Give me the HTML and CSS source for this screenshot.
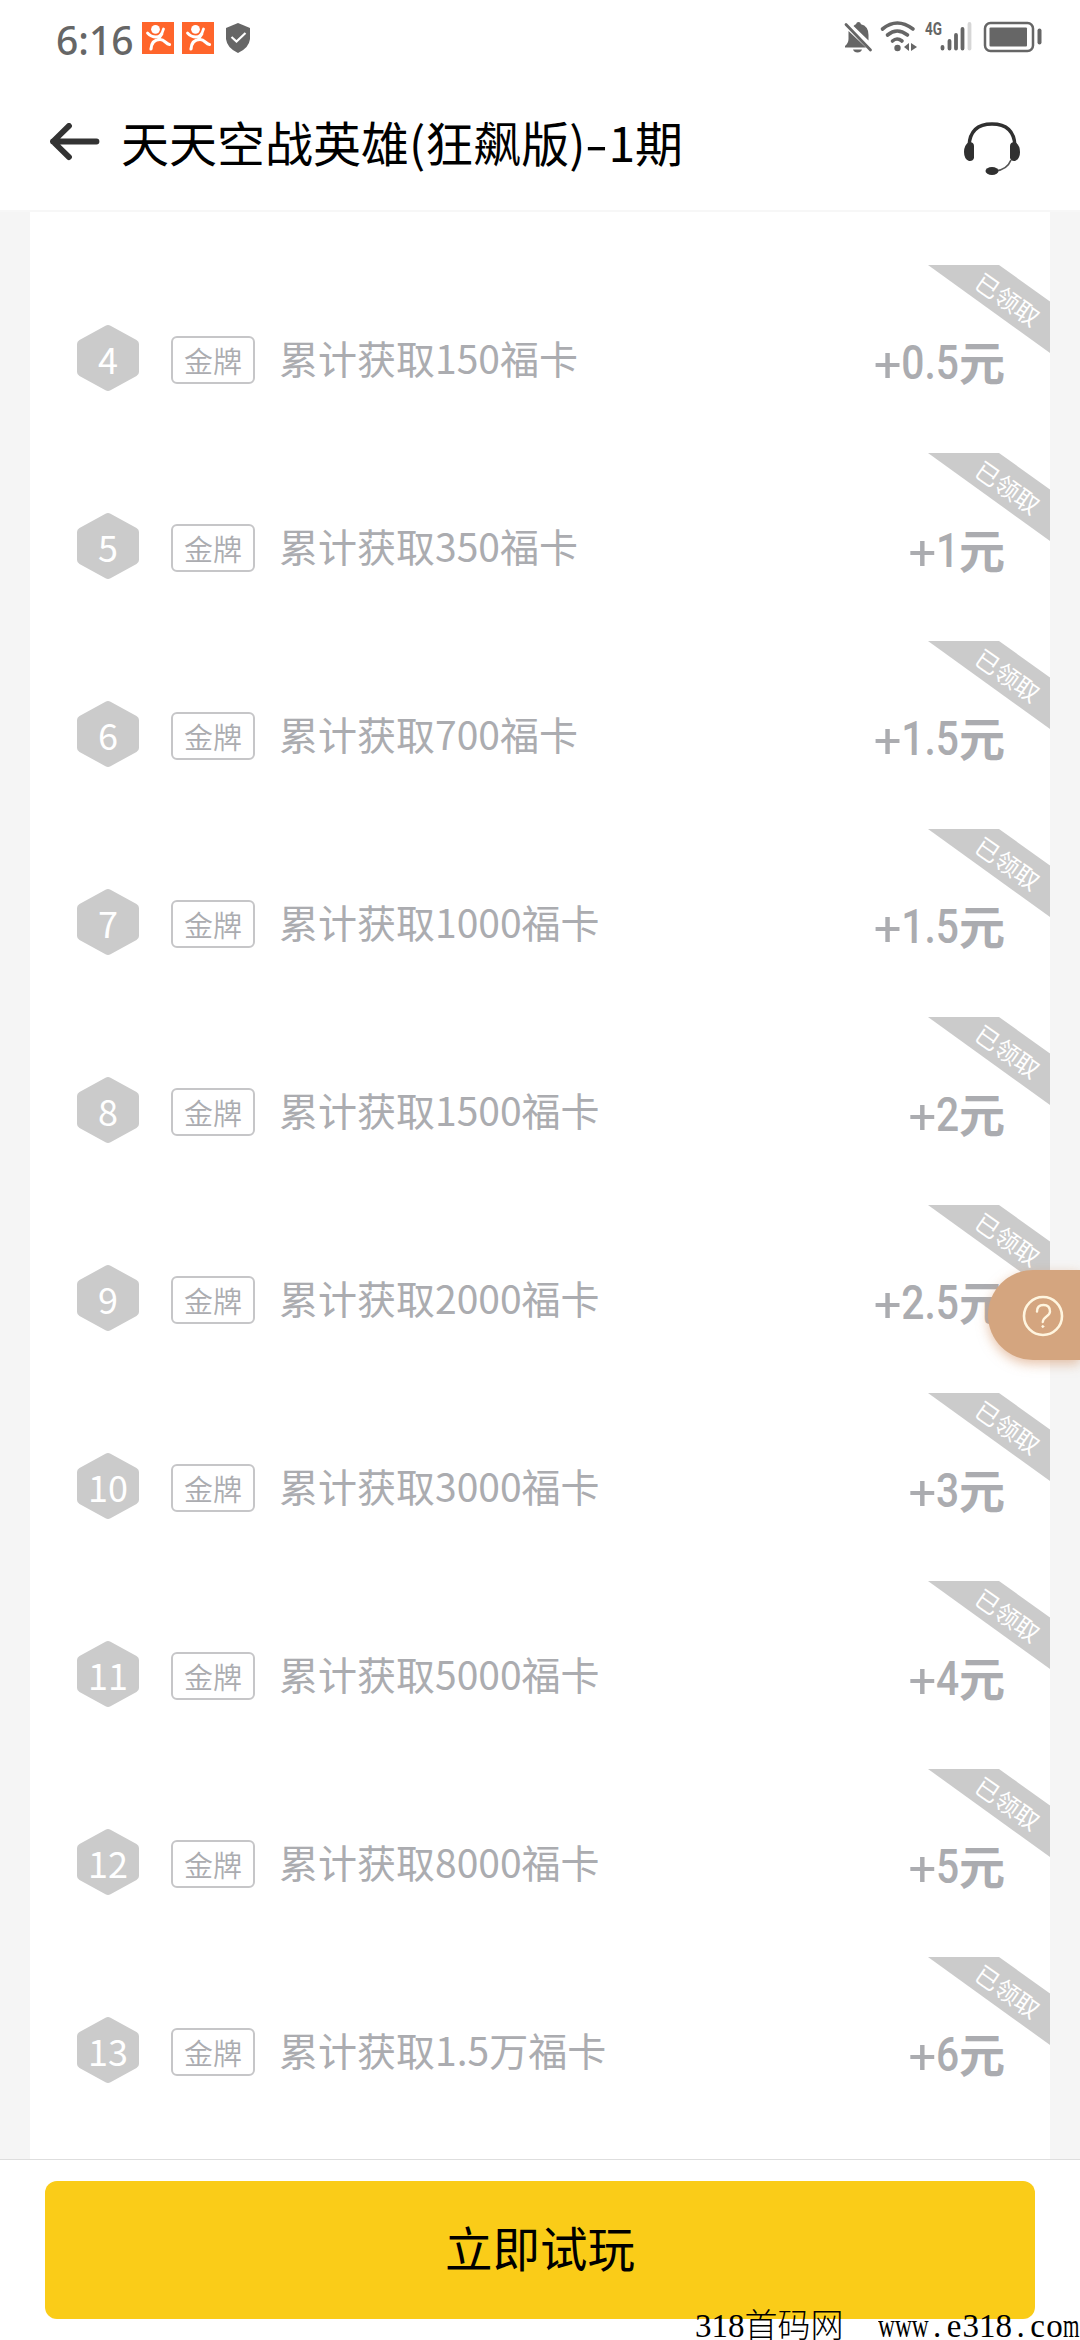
FILE: index.html
```html
<!DOCTYPE html>
<html lang="zh-CN">
<head>
<meta charset="utf-8">
<title>天天空战英雄(狂飙版)-1期</title>
<link rel="stylesheet" href="styles.css">
</head>
<body>
<svg class="defs" width="0" height="0" aria-hidden="true">
  <symbol id="hex" viewBox="0 0 62 66"><path d="M28.5 .8Q31-.6 33.5.8L59.5 15Q62 16.500 62 19V47Q62 49.500 59.500 51L33.500 65.200Q31 66.600 28.500 65.200L2.500 51Q0 49.500 0 47V19Q0 16.500 2.500 15Z" fill="#cbcbcb"/></symbol>
  <symbol id="band" viewBox="0 0 122 88"><path d="M0 0H71L122 36.500V88Z" fill="#cbcbcb"/></symbol>
  <symbol id="runner" viewBox="0 0 32 32"><rect width="32" height="32" fill="#ff652b"/><circle cx="13.500" cy="7.300" r="4.400" fill="#fff"/><g fill="none" stroke="#fff" stroke-linecap="round" stroke-width="2.800"><path d="M5.500 11Q9 15 14 15Q19.500 14.500 21.500 7"/><path d="M9 27C9.500 20.500 13 17.500 18 17.500S23.500 22 27.500 22.500" stroke-width="3.200"/><path d="M20 12L16.500 17"/></g></symbol>
</svg>
<div class="screen">
  <header class="top">
    <div class="status">
      <span class="clock">6:16</span>
      <svg class="app" width="32" height="32"><use href="#runner"/></svg>
      <svg class="app" width="32" height="32"><use href="#runner"/></svg>
      <svg class="shield" width="24" height="30" viewBox="0 0 24 30"><path d="M12 0L24 5V16Q23 25 12 30Q1 25 0 16V5Z" fill="#666"/><path d="M5.500 14L10.500 18.500L19.500 10" fill="none" stroke="#fff" stroke-width="2.200"/></svg>
      <div class="signals">
        <svg width="200" height="34" viewBox="0 0 200 34">
          <path d="M4.500 10L22 26.500H1V25Q4.500 22 4.500 18Z" fill="#666"/>
          <path d="M9.500 5Q11 3.500 12 3.200Q12.500 1 14.500 1Q16.500 1 17 3.200Q24.500 5 24.500 14V19.500Z" fill="#666"/>
          <path d="M9 28.500H18Q17 31.500 13.500 31.500T9 28.500Z" fill="#666"/>
          <path d="M2 3.500L26.500 29" stroke="#666" stroke-width="2.800" stroke-linecap="round"/>
          <g fill="none" stroke="#666" stroke-width="3.600" stroke-linecap="round"><path d="M38.500 8Q53-4 69 8"/><path d="M43.500 14Q53 6 63.500 14"/><path d="M48.500 20Q53 16 58 20"/></g>
          <circle cx="53.500" cy="27" r="3.200" fill="#666"/><path d="M60 26L65 22V30ZM73 26L67 22V30Z" fill="#666"/>
          <g stroke="#666" stroke-width="3.800" stroke-linecap="round"><path d="M98.500 26V27.500M105.500 20V27.500M112 14V27.500M118.500 8V27.500"/><path d="M125.500 3V27.500" stroke="#d6d6d6"/></g>
          <rect x="141" y="2" width="48" height="28" rx="5.500" fill="none" stroke="#666" stroke-width="2.500"/><rect x="145.500" y="6.500" width="37.500" height="19" rx="1" fill="#666"/><rect x="193.500" y="7.500" width="4" height="16" rx="2" fill="#666"/>
          <text class="net" x="81" y="14" textLength="17" lengthAdjust="spacingAndGlyphs">4G</text>
        </svg>
      </div>
    </div>
    <div class="nav">
      <svg class="back" width="50" height="38" viewBox="0 0 50 38"><path d="M19 2.900L3 18.500L19 34.100M3 18.500H46.500" fill="none" stroke="#333" stroke-width="5.800" stroke-linecap="round" stroke-linejoin="round"/></svg>
      <h1 class="title">天天空战英雄(狂飙版)<span class="dash">-</span>1期</h1>
      <svg class="headset" width="56" height="54" viewBox="0 0 56 54"><path d="M5 24Q6 2 28 2T51 24" fill="none" stroke="#303030" stroke-width="3.400"/><path d="M47 38Q43 48 31 49" fill="none" stroke="#555" stroke-width="1.700"/><path d="M5 20Q10 20 10 24V36Q9 39.500 5 39Q0 37 0 30T5 20Z" fill="#303030"/><path d="M51 20Q46 20 46 24V36Q47 39.500 51 39Q56 37 56 30T51 20Z" fill="#303030"/><ellipse cx="28" cy="49" rx="6.500" ry="4" fill="#303030"/></svg>
    </div>
  </header>
  <main class="page">
    <ul class="tasks">
      <li class="task"><div class="num"><svg><use href="#hex"/></svg><b>4</b></div><span class="tag">金牌</span><span class="desc">累计获取150福卡</span><div class="price"><span class="amount"><i>+</i>0.5</span><span class="unit">元</span></div><div class="got"><svg><use href="#band"/></svg><em>已领取</em></div></li>
      <li class="task"><div class="num"><svg><use href="#hex"/></svg><b>5</b></div><span class="tag">金牌</span><span class="desc">累计获取350福卡</span><div class="price"><span class="amount"><i>+</i>1</span><span class="unit">元</span></div><div class="got"><svg><use href="#band"/></svg><em>已领取</em></div></li>
      <li class="task"><div class="num"><svg><use href="#hex"/></svg><b>6</b></div><span class="tag">金牌</span><span class="desc">累计获取700福卡</span><div class="price"><span class="amount"><i>+</i>1.5</span><span class="unit">元</span></div><div class="got"><svg><use href="#band"/></svg><em>已领取</em></div></li>
      <li class="task"><div class="num"><svg><use href="#hex"/></svg><b>7</b></div><span class="tag">金牌</span><span class="desc">累计获取1000福卡</span><div class="price"><span class="amount"><i>+</i>1.5</span><span class="unit">元</span></div><div class="got"><svg><use href="#band"/></svg><em>已领取</em></div></li>
      <li class="task"><div class="num"><svg><use href="#hex"/></svg><b>8</b></div><span class="tag">金牌</span><span class="desc">累计获取1500福卡</span><div class="price"><span class="amount"><i>+</i>2</span><span class="unit">元</span></div><div class="got"><svg><use href="#band"/></svg><em>已领取</em></div></li>
      <li class="task"><div class="num"><svg><use href="#hex"/></svg><b>9</b></div><span class="tag">金牌</span><span class="desc">累计获取2000福卡</span><div class="price"><span class="amount"><i>+</i>2.5</span><span class="unit">元</span></div><div class="got"><svg><use href="#band"/></svg><em>已领取</em></div></li>
      <li class="task"><div class="num"><svg><use href="#hex"/></svg><b>10</b></div><span class="tag">金牌</span><span class="desc">累计获取3000福卡</span><div class="price"><span class="amount"><i>+</i>3</span><span class="unit">元</span></div><div class="got"><svg><use href="#band"/></svg><em>已领取</em></div></li>
      <li class="task"><div class="num"><svg><use href="#hex"/></svg><b>11</b></div><span class="tag">金牌</span><span class="desc">累计获取5000福卡</span><div class="price"><span class="amount"><i>+</i>4</span><span class="unit">元</span></div><div class="got"><svg><use href="#band"/></svg><em>已领取</em></div></li>
      <li class="task"><div class="num"><svg><use href="#hex"/></svg><b>12</b></div><span class="tag">金牌</span><span class="desc">累计获取8000福卡</span><div class="price"><span class="amount"><i>+</i>5</span><span class="unit">元</span></div><div class="got"><svg><use href="#band"/></svg><em>已领取</em></div></li>
      <li class="task"><div class="num"><svg><use href="#hex"/></svg><b>13</b></div><span class="tag">金牌</span><span class="desc">累计获取1.5万福卡</span><div class="price"><span class="amount"><i>+</i>6</span><span class="unit">元</span></div><div class="got"><svg><use href="#band"/></svg><em>已领取</em></div></li>
    </ul>
  </main>
  <footer class="bottom"><button class="play">立即试玩</button></footer>
  <div class="help"><svg width="42" height="42" viewBox="0 0 42 42" fill="none" stroke="#fff5df" stroke-linecap="round"><circle cx="21" cy="21" r="19" stroke-width="2.600"/><path d="M15 16.500Q15 10 21.500 10T28 16.500Q28 19 24.500 21.500T20.800 27" stroke-width="2.400"/><circle cx="20.800" cy="31.500" r="1" fill="#fff5df" stroke-width="1"/></svg></div>
  <div class="mark"><span>318首码网</span><span class="site"><span class="www">www</span><s>.</s><s>e</s>318<s>.</s><s>c</s><s>o</s><span class="m">m</span></span></div>
</div>
</body>
</html>
```
FILE: styles.css
```css
* { box-sizing: border-box; }
body { margin: 0; font-family: "Noto Sans CJK SC", "Noto Sans", sans-serif; }
.defs { position: absolute; }
.screen {
  position: relative;
  display: flex;
  flex-direction: column;
  width: 1080px;
  height: 2340px;
  overflow: hidden;
  background: #fff;
}
.top { height: 212px; flex: none; border-bottom: 2px solid #f7f7f7; }
.status { display: flex; height: 76px; padding: 0 36px 0 56px; }
.clock {
  width: 86px;
  padding-top: 13px;
  font: 500 39px/54px "Noto Sans", sans-serif;
  color: #666;
  white-space: nowrap;
}
.app { margin: 22px 8px 0 0; }
.shield { margin: 23px 0 0 4px; }
.signals { margin: 21px 0 0 auto; }
.net { font: 700 18px Roboto, sans-serif; fill: #666; }
.signals svg { display: block; overflow: visible; }
.nav { display: flex; align-items: flex-start; height: 134px; padding: 0 60px 0 50px; }
.back { margin-top: 47px; }
.title {
  margin: 30px auto 0 21px;
  font-size: 48px;
  font-weight: 400;
  line-height: 70px;
  color: #000;
  white-space: nowrap;
}
.dash { display: inline-block; width: 23px; text-align: center; transform: scaleX(1.4); }
.headset { margin-top: 46px; }
.page { flex: 1; min-height: 0; padding: 0 30px; background: #f5f5f5; }
.tasks { height: 100%; margin: 0; padding: 53px 0 0; list-style: none; background: #fff; }
.task { position: relative; display: flex; height: 188px; padding: 0 45px 0 47px; color: #abacb0; }
.num { display: grid; width: 62px; height: 66px; margin-top: 60px; place-items: center; }
.num svg { grid-area: 1 / 1; width: 62px; height: 66px; }
.num b { grid-area: 1 / 1; font-size: 36px; font-weight: 400; line-height: 60px; color: #fff; }
.tag {
  width: 84px;
  height: 48px;
  margin: 71px 0 0 32px;
  border: 2px solid #c6c6c8;
  border-radius: 6px;
  font-size: 29px;
  font-weight: 350;
  line-height: 44px;
  text-align: center;
}
.desc { margin: 63px 0 0 24px; font-size: 39px; line-height: 58px; white-space: nowrap; }
.price { display: flex; margin: 64px 0 0 auto; line-height: 64px; }
.amount {
  padding-top: 2px;
  font-family: Roboto, sans-serif;
  font-size: 48px;
  font-weight: 500;
  transform: scaleX(.85);
  transform-origin: right;
}
.amount i {
  display: inline-block;
  width: 32px;
  font-style: normal;
  font-weight: 400;
  text-align: center;
  transform: translateY(2px) scaleX(1.2);
}
.unit { margin-top: -1px; font-size: 46px; font-weight: 700; }
.got { position: absolute; top: 0; right: 0; width: 122px; height: 88px; }
.got svg { width: 122px; height: 88px; }
.got em {
  position: absolute;
  top: 19px;
  left: 44px;
  width: 72px;
  font-size: 24px;
  font-style: normal;
  line-height: 30px;
  text-align: center;
  color: #fff;
  transform: rotate(35deg);
}
.bottom { height: 181px; flex: none; padding: 21px 45px 0; border-top: 1px solid #dedede; background: #fff; }
.play {
  display: block;
  width: 990px;
  height: 138px;
  padding: 0 0 6px;
  border: 0;
  border-radius: 12px;
  background: #facc18;
  font: 400 47.5px/132px "Noto Sans CJK SC", sans-serif;
  color: #000;
}
.help {
  position: absolute;
  top: 1270px;
  right: 0;
  width: 92px;
  height: 90px;
  padding: 25px 0 0 34px;
  border-radius: 45px 0 0 45px;
  background: #d4a57f;
  box-shadow: 0 4px 12px rgba(212, 145, 100, .55);
}
.mark {
  position: absolute;
  left: 695px;
  bottom: -1px;
  display: flex;
  gap: 34px;
  font: 300 33px/30px "Liberation Serif", "Noto Sans CJK SC", serif;
  color: #000;
  white-space: nowrap;
}
.site { display: flex; }
.site s { width: 17px; text-align: center; text-decoration: none; }
.www { width: 51px; transform: scaleX(.71); transform-origin: left; }
.m { width: 17px; transform: scaleX(.64); transform-origin: left; }
```
